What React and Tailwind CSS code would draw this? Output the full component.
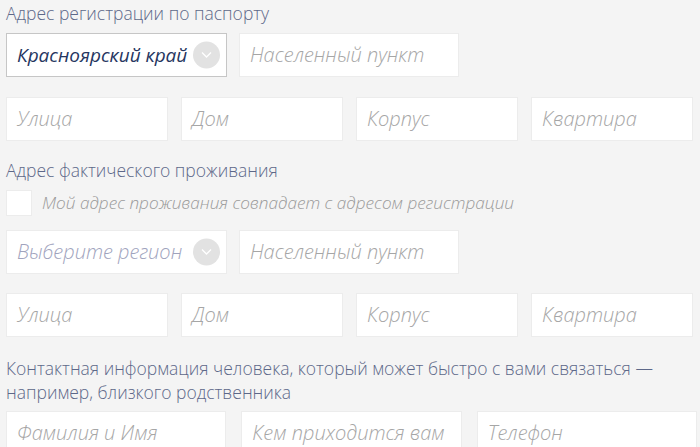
function Chevron() {
  return (
    <span className="absolute right-[6px] top-1/2 -translate-y-1/2 w-[27px] h-[27px] rounded-full bg-[#e2e2e2] flex items-center justify-center">
      <svg width="11" height="7" viewBox="0 0 11 7" fill="none">
        <path d="M1 1l4.5 4.5L10 1" stroke="#ffffff" strokeWidth="1.3" />
      </svg>
    </span>
  );
}

function Field({ text, className = "" }) {
  return (
    <div className={`h-11 bg-white border border-[#ececec] flex items-center px-[10px] ${className}`}>
      <span className="text-[20px] italic font-light text-[#a6a6a6] whitespace-nowrap">{text}</span>
    </div>
  );
}

function Select({ value, placeholder, active }) {
  return (
    <div
      className={`relative w-[221px] h-11 bg-white border flex items-center px-[10px] overflow-hidden ${
        active ? "border-[#c6c6c6]" : "border-[#ececec]"
      }`}
    >
      <span
        className={`italic whitespace-nowrap ${
          active ? "text-[19px] text-[#26365f] font-normal" : "text-[20px] text-[#a0a3bd] font-light"
        }`}
      >
        {value || placeholder}
      </span>
      <Chevron />
    </div>
  );
}

function Label({ children, className = "" }) {
  return (
    <p className={`text-[17.5px] leading-6 font-light text-[#5d6889] ${className}`}>{children}</p>
  );
}

export default function App() {
  return (
    <div className="w-[700px] h-[447px] overflow-hidden bg-[#f4f4f4] px-[6px] font-['Open_Sans',sans-serif]">
      <Label className="pt-px">Адрес регистрации по паспорту</Label>

      {/* Registration address */}
      <div className="flex gap-3 mt-2">
        <Select value="Красноярский край" active />
        <Field text="Населенный пункт" className="w-[220px]" />
      </div>
      <div className="grid grid-cols-4 gap-[13px] w-[687px] mt-5">
        <Field text="Улица" />
        <Field text="Дом" />
        <Field text="Корпус" />
        <Field text="Квартира" />
      </div>

      {/* Actual address */}
      <Label className="mt-[17px]">Адрес фактического проживания</Label>
      <div className="flex items-center gap-[10px] mt-2">
        <span className="w-[26px] h-[26px] bg-white border border-[#ececec]" />
        <span className="text-[17.2px] italic font-light text-[#9a9a9a]">
          Мой адрес проживания совпадает с адресом регистрации
        </span>
      </div>
      <div className="flex gap-3 mt-[14px]">
        <Select placeholder="Выберите регион" />
        <Field text="Населенный пункт" className="w-[220px]" />
      </div>
      <div className="grid grid-cols-4 gap-[13px] w-[687px] mt-[19px]">
        <Field text="Улица" />
        <Field text="Дом" />
        <Field text="Корпус" />
        <Field text="Квартира" />
      </div>

      {/* Contact person */}
      <Label className="mt-[19px]">
        Контактная информация человека, который может быстро с вами связаться —<br />
        например, близкого родственника
      </Label>
      <div className="grid grid-cols-3 gap-[15px] w-[691px] mt-[7px]">
        <Field text="Фамилия и Имя" />
        <Field text="Кем приходится вам" />
        <Field text="Телефон" />
      </div>
    </div>
  );
}
